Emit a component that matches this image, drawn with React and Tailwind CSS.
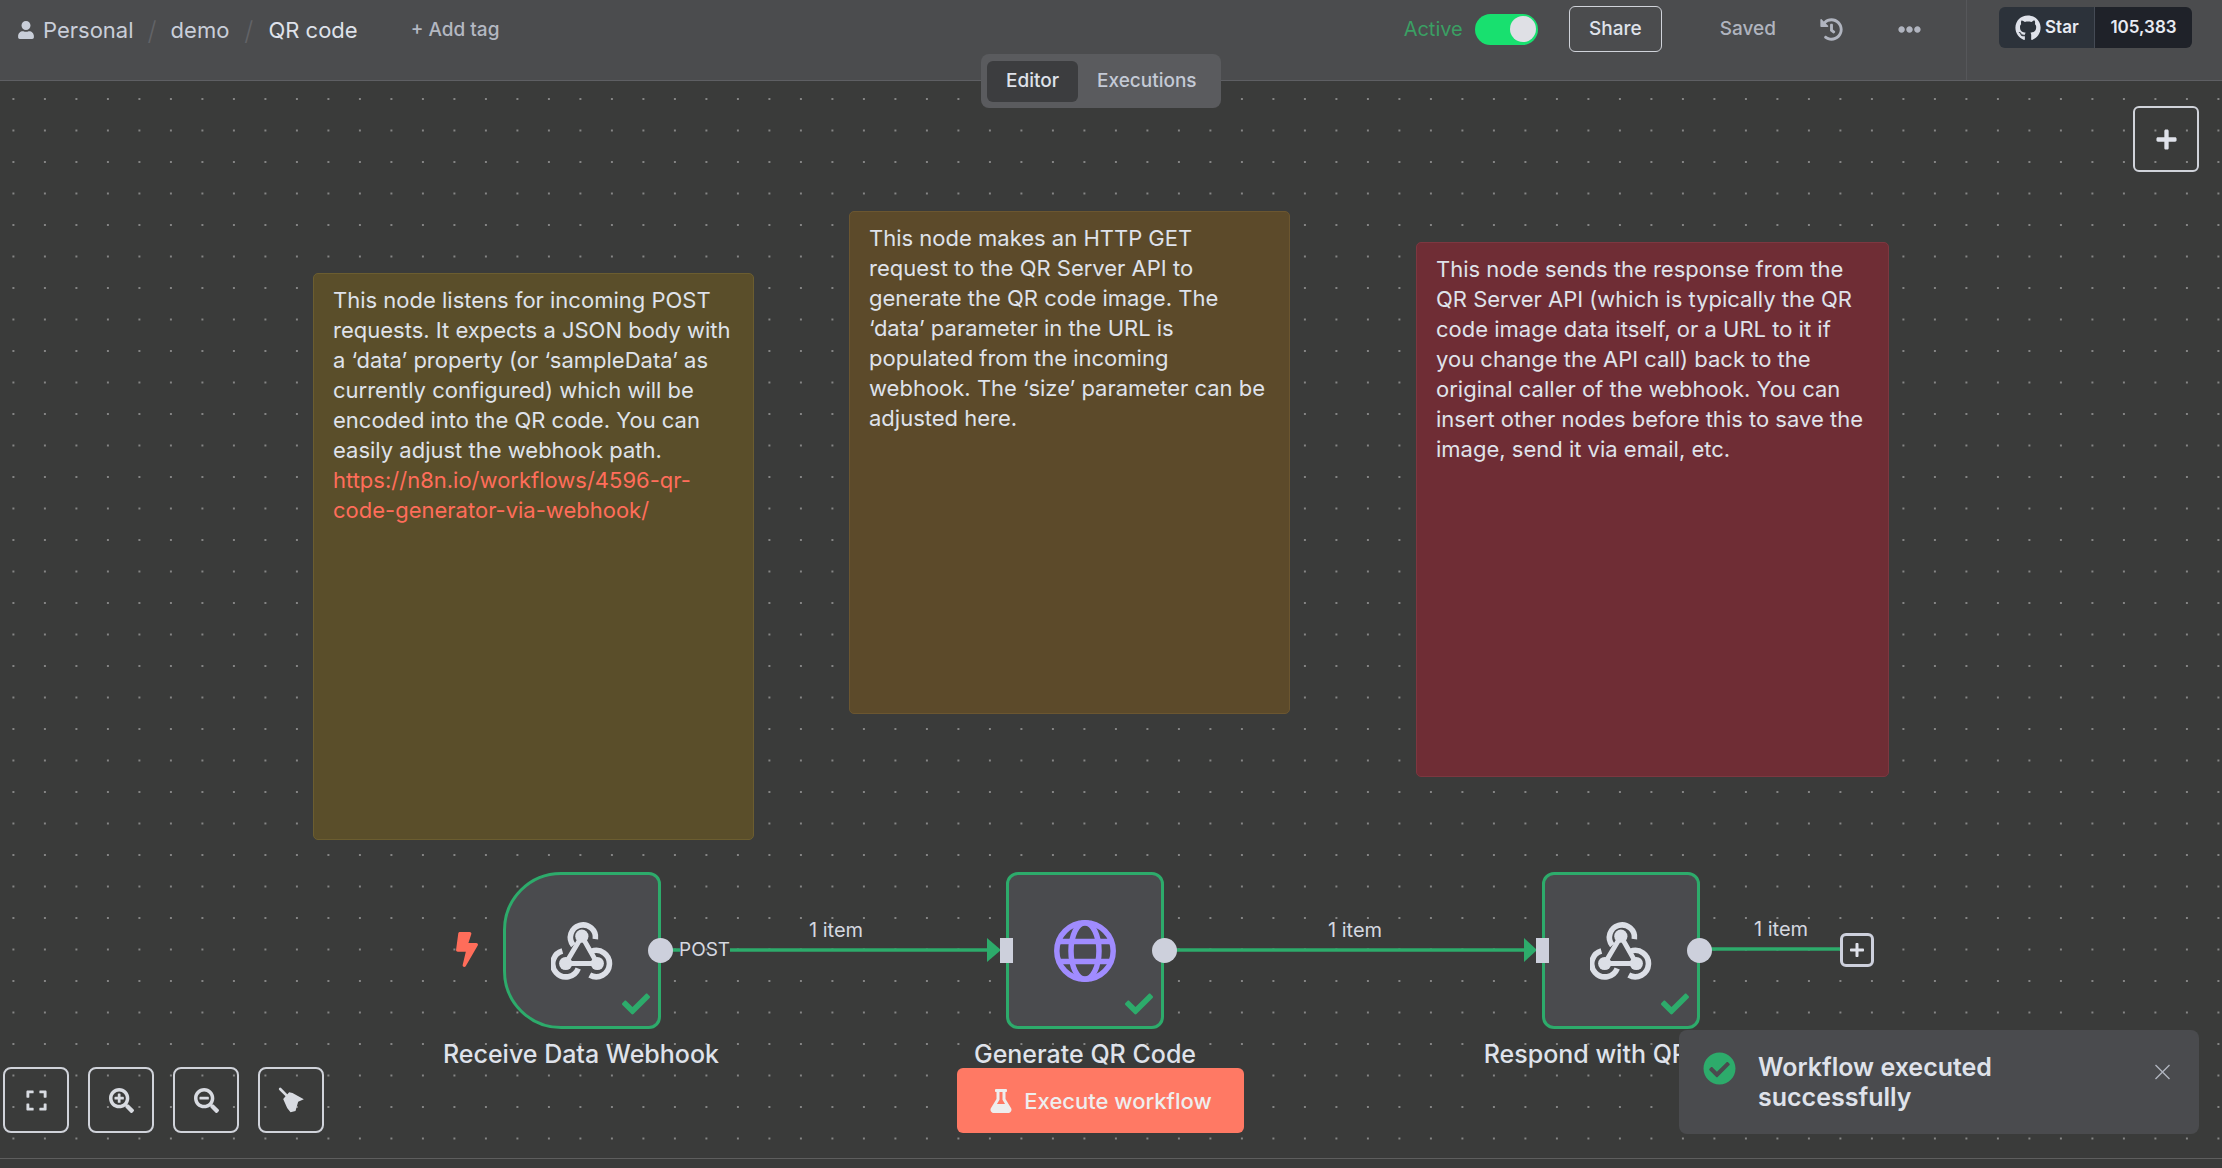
import React from "react";
import { FaUser, FaHistory, FaEllipsisH, FaGithub, FaPlus, FaExpand, FaSearchPlus, FaSearchMinus, FaBolt, FaCheck, FaFlask, FaCheckCircle } from "react-icons/fa";

function WebhookIcon() {
  return (
    <svg viewBox="88 88 190 182" className="w-[63px] h-[60px] -translate-y-px" fill="none" stroke="#dcdfe6" strokeWidth="17" strokeLinecap="butt">
      <path d="M155 165 A38 38 0 1 1 222 146" />
      <path d="M122 182 A40 40 0 1 0 170 235" />
      <path d="M205 255 A40 40 0 1 0 210 183" />
      <path d="M181 137 L132 220 L228 220 Z" strokeWidth="15" />
      <circle cx="181" cy="137" r="20" fill="#dcdfe6" stroke="none" />
      <circle cx="132" cy="220" r="20" fill="#dcdfe6" stroke="none" />
      <circle cx="228" cy="220" r="20" fill="#dcdfe6" stroke="none" />
    </svg>
  );
}

function GlobeIcon() {
  return (
    <svg viewBox="0 0 62 62" className="w-[62px] h-[62px]" fill="none" stroke="#a08cff" strokeWidth="5.5">
      <circle cx="31" cy="31" r="28.2" />
      <ellipse cx="31" cy="31" rx="14" ry="28.2" />
      <path d="M4 21.5 H58 M4 41.5 H58" />
    </svg>
  );
}

function BroomIcon() {
  return (
    <svg viewBox="835 140 80 78" className="w-[27px] h-[26px]" fill="#d8dbe1">
      <path d="M841 146 L866 171" stroke="#d8dbe1" strokeWidth="8" strokeLinecap="round" fill="none" />
      <path d="M850 176 L868 156 L878 158 L912 177 L895 184 L887 212 L872 216 L862 203 Z" />
    </svg>
  );
}

function Node({ left, rounded, children }) {
  return (
    <div className={`absolute top-[791px] w-[158px] h-[157px] border-[3px] border-[#2dab6b] bg-[#4a4b4e] flex items-center justify-center ${left} ${rounded}`}>
      {children}
      <FaCheck className="absolute right-[8px] bottom-[8px] w-[28px] h-[28px] text-[#2dab6b]" />
    </div>
  );
}

function Sticky({ pos, colors, children }) {
  return (
    <div className={`absolute border rounded-[5px] pl-[19px] pr-[16px] pt-[11px] pb-[12px] text-[22px] leading-[30px] text-[#dfe2ea] ${pos} ${colors}`}>
      {children}
    </div>
  );
}

function CtrlBtn({ children }) {
  return (
    <div className="w-[66px] h-[66px] rounded-[8px] border-2 border-[#d0d3da] flex items-center justify-center text-[#d8dbe1]">
      {children}
    </div>
  );
}

export default function App() {
  return (
    <div className="relative w-[2222px] h-[1168px] overflow-hidden flex flex-col bg-[#3a3b3a] font-['Inter',sans-serif] text-[#dfe2ea]">
      <header className="h-[81px] shrink-0 bg-[#4b4c4e] border-b border-[#5e5f63] flex items-start">
        <div className="flex items-center h-[60px] pl-[18px] text-[22px] text-[#c9ced9]">
          <FaUser className="w-[16px] h-[18px] mr-[9px]" />
          <span>Personal</span>
          <span className="ml-[14px] mr-[14px] text-[#626367] text-[26px] font-light">/</span>
          <span>demo</span>
          <span className="ml-[15px] mr-[15px] text-[#626367] text-[26px] font-light">/</span>
          <span className="text-[#dfe2ea]">QR code</span>
          <span className="ml-[53px] pt-px text-[19px] font-medium text-[#b4b8c2]">+ Add tag</span>
        </div>
        <div className="flex-1" />
        <div className="flex items-center h-[58px] text-[19px] font-medium">
          <span className="text-[#3a9f63] font-normal text-[20px] ml-px">Active</span>
          <div className="ml-[12px] w-[63px] h-[31px] rounded-full bg-[#18e06f] flex items-center justify-end pr-[2px]">
            <div className="w-[26px] h-[26px] rounded-full bg-[#dfe0e5]" />
          </div>
          <div className="ml-[31px] w-[93px] h-[46px] rounded-[6px] border-[1.5px] border-[#d0d3da] flex items-center justify-center text-[#dfe2ea]">Share</div>
          <span className="ml-[58px] text-[#b0b4bf] text-[19px]">Saved</span>
          <FaHistory className="ml-[44px] w-[23px] h-[23px] text-[#b0b4bf]" />
          <FaEllipsisH className="ml-[55px] w-[23px] h-[23px] text-[#b0b4bf]" />
          <div className="ml-[45px] w-px h-[80px] bg-[#56575a] self-start" />
        </div>
        <div className="ml-[32px] mr-[30px] mt-[7px] h-[41px] w-[193px] rounded-[6px] overflow-hidden flex text-[17px] font-semibold text-[#e8ebf2]">
          <div className="w-[96px] bg-[#2c323a] border-r border-[#454b55] flex items-center pl-[16px] gap-[4px]">
            <FaGithub className="w-[26px] h-[26px] shrink-0 text-[#dfe2ea]" />
            <span className="pt-px">Star</span>
          </div>
          <div className="flex-1 bg-[#1f2229] flex items-center justify-center pt-px">105,383</div>
        </div>
      </header>

      <div className="absolute left-[981px] top-[54px] z-10 w-[240px] h-[54px] rounded-[8px] bg-[#5a5b5e] flex items-center pl-[6px] text-[19px] font-medium">
        <div className="w-[91px] h-[41px] rounded-[6px] bg-[#3c3d3f] flex items-center justify-center text-[#dfe2ea]">Editor</div>
        <span className="ml-[19px] text-[#c4cad6]">Executions</span>
      </div>

      <main className="relative flex-1 bg-[#3a3b3a] bg-[radial-gradient(circle,#858585_1px,transparent_1.1px)] bg-[size:31.5px_31.5px] bg-[position:-2.35px_2.25px] border-b border-[#5e5e5e]">
        <Sticky pos="left-[313px] top-[192px] w-[441px] h-[567px]" colors="bg-[#5a4e2a] border-[#6b5d30]">
          This node listens for incoming POST requests. It expects a JSON body with a ‘data’ property (or ‘sampleData’ as currently configured) which will be encoded into the QR code. You can easily adjust the webhook path. <span className="text-[#ff6d5a]">https://n8n.io/workflows/4596-qr-code-generator-via-webhook/</span>
        </Sticky>
        <Sticky pos="left-[849px] top-[130px] w-[441px] h-[503px]" colors="bg-[#5c4a2a] border-[#6b5630]">
          This node makes an HTTP GET request to the QR Server API to generate the QR code image. The ‘data’ parameter in the URL is populated from the incoming webhook. The ‘size’ parameter can be adjusted here.
        </Sticky>
        <Sticky pos="left-[1416px] top-[161px] w-[473px] h-[535px]" colors="bg-[#6f2d35] border-[#7d3740]">
          This node sends the response from the QR Server API (which is typically the QR code image data itself, or a URL to it if you change the API call) back to the original caller of the webhook. You can insert other nodes before this to save the image, send it via email, etc.
        </Sticky>

        <svg className="absolute inset-0 w-full h-full" fill="none" stroke="#2dab6b" strokeWidth="3.5">
          <path d="M672 869 H680 M730 869 H990" />
          <path d="M987 857 L1001 869 L987 881 Z" fill="#2dab6b" stroke="none" />
          <path d="M1170 869 H1526" />
          <path d="M1524 857 L1537 869 L1524 881 Z" fill="#2dab6b" stroke="none" />
          <path d="M1700 868 H1841" />
        </svg>

        <FaBolt className="absolute left-[456px] top-[851px] w-[22px] h-[35px] text-[#ff6d5a]" />

        <Node left="left-[503px]" rounded="rounded-l-[58px] rounded-r-[12px]"><WebhookIcon /></Node>
        <Node left="left-[1006px]" rounded="rounded-[12px]"><GlobeIcon /></Node>
        <Node left="left-[1542px]" rounded="rounded-[12px]"><WebhookIcon /></Node>

        <div className="absolute left-[648px] top-[857px] w-[25px] h-[25px] rounded-full bg-[#cdd0dc]" />
        <div className="absolute left-[1152px] top-[857px] w-[25px] h-[25px] rounded-full bg-[#cdd0dc]" />
        <div className="absolute left-[1687px] top-[857px] w-[25px] h-[25px] rounded-full bg-[#cdd0dc]" />
        <div className="absolute left-[1000px] top-[857px] w-[13px] h-[25px] bg-[#cdd0dc]" />
        <div className="absolute left-[1536px] top-[857px] w-[13px] h-[25px] bg-[#cdd0dc]" />

        <span className="absolute left-[679px] top-[857px] text-[19px] leading-[24px] text-[#d5d8e0]">POST</span>
        <span className="absolute left-[809px] top-[836px] text-[20px] leading-[26px] text-[#d5d8e0]">1 item</span>
        <span className="absolute left-[1328px] top-[836px] text-[20px] leading-[26px] text-[#d5d8e0]">1 item</span>
        <span className="absolute left-[1754px] top-[835px] text-[20px] leading-[26px] text-[#d5d8e0]">1 item</span>

        <div className="absolute left-[1840px] top-[852px] w-[34px] h-[34px] rounded-[6px] border-[3px] border-[#cdd0dc] bg-[#3a3b3a] flex items-center justify-center">
          <FaPlus className="w-[16px] h-[16px] text-[#dfe2ea]" />
        </div>

        <span className="absolute left-[381px] w-[400px] top-[956px] text-center text-[25px] leading-[34px] font-medium">Receive Data Webhook</span>
        <span className="absolute left-[885px] w-[400px] top-[956px] text-center text-[25px] leading-[34px] font-medium">Generate QR Code</span>
        <span className="absolute left-[1421px] w-[400px] top-[956px] text-center text-[25px] leading-[34px] font-medium">Respond with QR Code</span>

        <div className="absolute left-[2133px] top-[25px] w-[66px] h-[66px] rounded-[6px] border-2 border-[#d0d3da] flex items-center justify-center">
          <FaPlus className="w-[23px] h-[23px] text-[#dfe2ea]" />
        </div>

        <div className="absolute left-[3px] top-[986px] flex gap-[19px]">
          <CtrlBtn><FaExpand className="w-[23px] h-[23px]" /></CtrlBtn>
          <CtrlBtn><FaSearchPlus className="w-[25px] h-[25px]" /></CtrlBtn>
          <CtrlBtn><FaSearchMinus className="w-[25px] h-[25px]" /></CtrlBtn>
          <CtrlBtn><BroomIcon /></CtrlBtn>
        </div>

        <div className="absolute left-[957px] top-[987px] w-[287px] h-[65px] rounded-[6px] bg-[#ff7964] flex items-center justify-center gap-[11px] pt-px text-[22px] font-medium text-[#eeeeee]">
          <FaFlask className="w-[24px] h-[24px]" />
          <span>Execute workflow</span>
        </div>

        <div className="absolute left-[1679px] top-[949px] w-[520px] h-[104px] rounded-[8px] bg-[#4a4b4e] flex items-start pl-[24px] pt-[22px]">
          <FaCheckCircle className="w-[33px] h-[33px] shrink-0 text-[#2dab6b]" />
          <div className="ml-[22px] w-[330px] text-[25px] leading-[30px] font-semibold text-[#dfe2ea]">Workflow executed successfully</div>
          <svg viewBox="0 0 16 16" className="absolute right-[28px] top-[34px] w-[17px] h-[16px]" fill="none" stroke="#b0b4bf" strokeWidth="1.4">
            <path d="M1 1 L15 15 M15 1 L1 15" />
          </svg>
        </div>
      </main>
      <div className="h-[9px] shrink-0 bg-[#3a3b3a]" />
    </div>
  );
}
